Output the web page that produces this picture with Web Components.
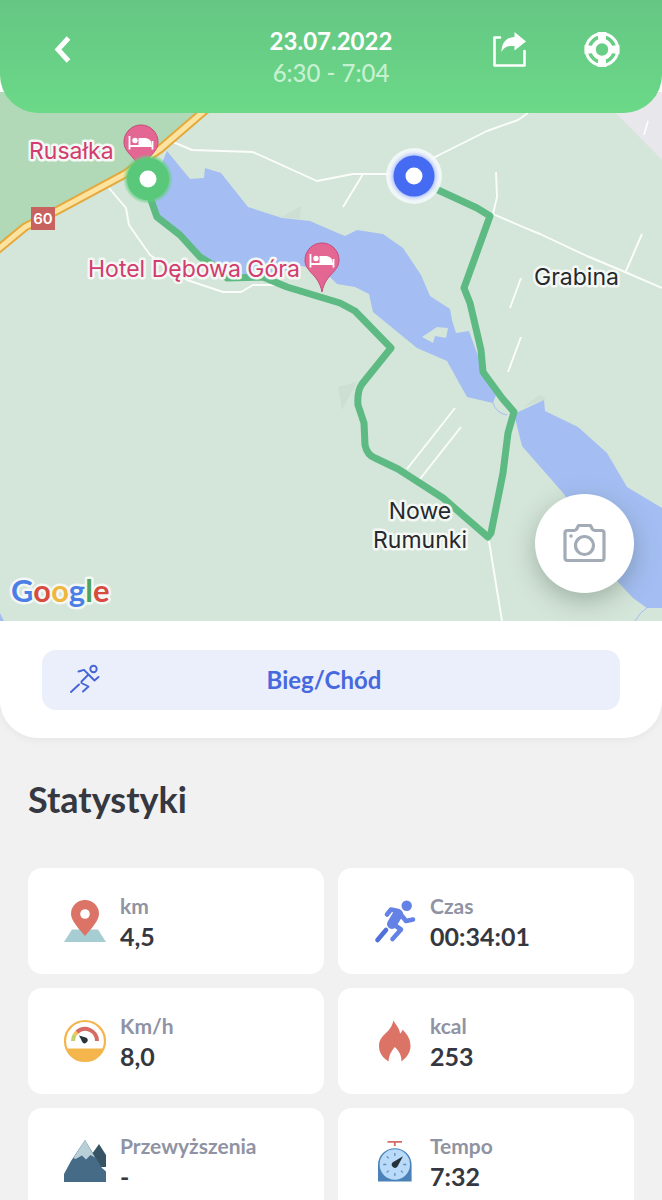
<!DOCTYPE html>
<html lang="pl">
<head>
  <meta charset="utf-8">
  <meta name="viewport" content="width=device-width, initial-scale=1">
  <title>Trening 23.07.2022</title>
  <style>
    body {
      margin: 0;
      background-color: #f1f1f1;
      color: #353840;
      font-family: Lato, "Liberation Sans", sans-serif;
    }
  </style>
</head>
<body>
  <workout-page></workout-page>

  <script>
    const icons = {
      back: `<path d="M28.500 9 18 20.500 28.500 32" fill="none" stroke="#fff" stroke-width="5"/>`,
      share: `
        <path d="M10 8.500H4.500V36.500H34.500V22" fill="none" stroke="#fff" stroke-width="2.600" stroke-linejoin="round" stroke-linecap="round"/>
        <path d="M24.500 3 36 12.500 24.500 21.500V17C18 16.500 14 18 11.500 23C11.500 14 16 8.500 24.500 8Z" fill="#fff"/>`,
      help: `
        <circle cx="20" cy="20.500" r="15.800" fill="none" stroke="#fff" stroke-width="3"/>
        <circle cx="20" cy="20.500" r="8.500" fill="none" stroke="#fff" stroke-width="4.500"/>
        <path d="M15.500 3h9l-1 10h-7zM15.500 38h9l-1-10h-7zM2.500 16v9l10-1v-7zM37.500 16v9l-10-1v-7z" fill="#fff"/>`,
      camera: `
        <g fill="none" stroke="#a3abb7" stroke-width="3.200" stroke-linejoin="round">
          <path d="M3.500 7.500H10.500Q12 7.500 13 5.500L14.500 2.500H26.500L28 5.500Q29 7.500 30.500 7.500H37.500Q40 7.500 40 10V35Q40 37.500 37.500 37.500H3.500Q1 37.500 1 35V10Q1 7.500 3.500 7.500Z"/>
          <circle cx="20.500" cy="22.500" r="9"/>
        </g>
        <circle cx="7" cy="13" r="1.800" fill="#a3abb7"/>`,
      run: `
        <g fill="none" stroke="#4465d6" stroke-width="1.900" stroke-linecap="round" stroke-linejoin="round">
          <circle cx="23.500" cy="4" r="3.200"/>
          <path d="M8.500 6.500 14 4.800 18.500 9.500 24.500 15.500 28.500 12M18.500 9.500 11.500 16.500V18L18.500 21.500 13 26.500M9 19.500 1 27"/>
        </g>`,
      distance: `
        <path d="M8 29.500H34L42 42H0Z" fill="#a5cdd2"/>
        <path d="M21 36C15 29 7 20.500 7 14A14 14 0 0 1 35 14C35 20.500 27 29 21 36Z" fill="#db7367"/>
        <circle cx="21" cy="14" r="4.800" fill="#fff"/>`,
      time: `
        <g fill="none" stroke="#6481e5" stroke-width="4.600" stroke-linecap="round" stroke-linejoin="round">
          <circle cx="32.700" cy="5.800" r="5.200" fill="#6481e5" stroke="none"/>
          <path d="M13 14.500 17 9.500 24 11 32 21 39 19.500M19 24 27 29.500 18.500 39"/>
          <path d="M24 14 18 24" stroke-width="10"/>
          <path d="M12 30 3.500 40" stroke="#5270d9"/>
        </g>`,
      speed: `
        <path d="M2.500 28.500H39.500A20 20 0 0 1 2.500 28.500Z" fill="#f4b54c"/>
        <circle cx="21" cy="21" r="20" fill="none" stroke="#f4b54c" stroke-width="2.200"/>
        <g fill="none" stroke-width="4">
          <path d="M9 21A12 12 0 0 1 10.600 15" stroke="#c2d16a"/>
          <path d="M10.600 15A12 12 0 0 1 14 11.300" stroke="#f1c25a"/>
          <path d="M13 12A12 12 0 0 1 33 21" stroke="#d56c63"/>
        </g>
        <path d="M15 15.500 22.500 17.800A3 3 0 1 1 18.600 22.500Z" fill="#29343b"/>`,
      energy: `<path d="M19.500 .5C22 5 25.500 8 26 13.500C27 13 28 11.500 28.500 9.500C32 13 36.500 18 36.500 26C36.500 33 32 38 27.500 41.500C27.500 35 25 31 20.800 27C17.500 31 15 35 14.500 41.500C9 38 5 33 5 26C5 18 10 15.500 14 11C17 7.500 18.500 4.500 19.500 .5Z" fill="#db7367"/>`,
      climb: `
        <path d="M35 4 42 15V27H28V14Z" fill="#365463"/>
        <path d="M21 0 38 28 42 31.500V42H0V34L7 21Z" fill="#466b87"/>
        <path d="M21 0 31 17.500 26.500 15 22 19.500 18 15.500 11.500 19 9.500 18Z" fill="#b8cfd8"/>`,
      pace: `
        <path d="M13.500 1.800H28M20.800 1.800V6" stroke="#d56c63" stroke-width="1.800" fill="none"/>
        <path d="M4 41.500V25A16.800 16.800 0 0 1 37.600 25V41.500Z" fill="#4a82b8"/>
        <circle cx="20.800" cy="24.500" r="15.200" fill="#b9daf8"/>
        <path d="M20.800 13v3M20.800 33v3M9.300 24.500h3M29.300 24.500h3M12.700 16.400l2 2M12.700 32.600l2-2M28.900 32.600l-2-2" stroke="#5f90bb" stroke-width="1.300"/>
        <path d="M29 16.200 23.500 26.500A3.200 3.200 0 1 1 18.500 22.500Z" fill="#26323a"/>`
    };

    class TrackIcon extends HTMLElement {
      connectedCallback() {
        const size = this.getAttribute("size") || 42;
        this.attachShadow({ mode: "open" }).innerHTML = `
          <style>
            :host {
              display: block;
              flex: none;
            }

            svg {
              display: block;
              overflow: visible;
            }
          </style>
          <svg width="${size}" height="${size}" viewBox="0 0 ${size} ${size}" aria-hidden="true">
            ${icons[this.getAttribute("name")]}
          </svg>
        `;
      }
    }

    class WorkoutHeader extends HTMLElement {
      constructor() {
        super();
        this.attachShadow({ mode: "open" }).innerHTML = `
          <style>
            :host {
              display: block;
              position: relative;
              z-index: 1;
            }

            header {
              display: grid;
              grid-template-columns: 1fr auto 1fr;
              align-items: start;
              padding: 25px 40px 24px;
              border-radius: 0 0 38px 38px;
              background: linear-gradient(#65c683, #6bd988);
              color: #fff;
            }

            button {
              margin: 4px 0 0;
              padding: 0;
              border: 0;
              background: none;
              cursor: pointer;
            }

            .actions {
              display: flex;
              justify-content: flex-end;
              gap: 52px;
            }

            .title {
              text-align: center;
            }

            h1, p {
              margin: 0;
              font-size: 24px;
              line-height: 32px;
            }

            h1 {
              font-weight: 700;
            }

            p {
              color: #c6f1d1;
              font-weight: 500;
            }
          </style>

          <header>
            <div><button aria-label="Wstecz"><track-icon name="back" size="40"></track-icon></button></div>
            <div class="title">
              <h1><slot name="date"></slot></h1>
              <p><slot name="hours"></slot></p>
            </div>
            <div class="actions">
              <button aria-label="Udostępnij"><track-icon name="share" size="40"></track-icon></button>
              <button aria-label="Pomoc"><track-icon name="help" size="40"></track-icon></button>
            </div>
          </header>
        `;
      }
    }

    class RouteMap extends HTMLElement {
      constructor() {
        super();
        this.attachShadow({ mode: "open" }).innerHTML = `
          <style>
            :host {
              display: block;
              position: relative;
              margin-top: -21px;
            }

            svg {
              display: block;
              width: 100%;
            }

            text {
              font-family: Inter, Roboto, sans-serif;
              font-size: 23px;
              fill: #26292c;
              stroke: #f4f8f5;
              stroke-width: 5px;
              stroke-linejoin: round;
              paint-order: stroke;
            }

            .hotel {
              fill: #d23c6e;
            }

            .road-number {
              font-size: 15px;
              font-weight: 600;
              fill: #fff;
              stroke: none;
            }

            .logo {
              font-family: Lato, sans-serif;
              font-size: 31px;
              font-weight: 700;
            }

            .camera {
              position: absolute;
              right: 28px;
              bottom: 28px;
              display: grid;
              place-items: center;
              width: 99px;
              height: 99px;
              padding: 0;
              border: 0;
              border-radius: 50%;
              background-color: #fff;
              box-shadow: 0 8px 24px rgba(60, 80, 70, 0.35);
              cursor: pointer;
            }
          </style>

          <svg viewBox="0 92 662 529" role="group" aria-label="Mapa trasy">
            <defs>
              <radialGradient id="start-glow">
                <stop offset=".8" stop-color="#5fd07f"/>
                <stop offset="1" stop-color="#5fd07f" stop-opacity="0"/>
              </radialGradient>
              <radialGradient id="end-glow">
                <stop offset=".75" stop-color="#8ea6fb"/>
                <stop offset="1" stop-color="#e6ecfd" stop-opacity=".3"/>
              </radialGradient>
              <g id="hotel-pin">
                <path d="M0 32C-2 22-6 18-11 12.500C-15 8-17 5-17 0A17 17 0 0 1 17 0C17 5 15 8 11 12.500C6 18 2 22 0 32Z" fill="#e36792" stroke="#c64a78"/>
                <path d="M-11.500-6V7.500M-11.500 4H11.500M11.500-1V7.500" fill="none" stroke="#fff" stroke-width="1.800"/>
                <path d="M-2.500 3V-4H3C8-4 10.500-2 10.500 3Z" fill="#fff"/>
                <circle cx="-6" cy="-1.500" r="2.700" fill="#fff"/>
              </g>
            </defs>

            <!-- land -->
            <path d="M0 92H662V621H0Z" fill="#d4e5d9"/>
            <path d="M0 92H228L160 148 125 172 60 208 25 227 0 248Z" fill="#b1d8b7"/>
            <path d="M595 92H662V160Z" fill="#e7e7ec"/>
            <path d="M301 206 282 217 300 219ZM338 387 357 382 342 410ZM523 407 540 395 546 399Z" fill="#cdded2"/>

            <!-- water -->
            <g fill="#a4bef3">
              <path d="M167 151 190 179 204 178 205 168 221 173 248 207 282 218 310 221 340 234 345 236 357 230 383 234 403 248 421 275 430 296 450 309 452 320 456 333 469 331 482 367 497 392 493 403 467 397 447 361 417 348 373 312 369 294 355 287 337 284 325 272 302 266 270 275 240 275 208 262 160 217 150 190 162 163Z"/>
              <path d="M514 414 544 400 545 411 578 427 607 453 627 487 662 508V608H647L633 598 618 582 564 494 522 446Z"/>
              <path d="M0 613 4 621H0Z"/>
            </g>
            <path d="M493 403Q496 413 507 415M648 607Q640 612 635 621" fill="none" stroke="#a4bef3"/>
            <path d="M422 337 437 327 448 328 446 338 435 336 433 343Z" fill="#d4e5d9"/>

            <!-- local roads -->
            <path d="M173 142 192 150 253 152 317 181 353 174H414L435 157 487 131 518 120 528 113M363 174 343 207M496 172 497 197 493 214 523 227 540 234 587 256 625 272 662 288M642 234 626 271M521 278 510 308M521 337 508 372M455 408 407 469M461 427 420 479M489 541 502 621M648 121 644 135M109 188 126 208 129 225 150 255 187 280 223 292H241L253 285H277" fill="none" stroke="#fbfdfb" stroke-width="1.900" stroke-linejoin="round"/>

            <!-- road 60 -->
            <g fill="none" stroke-linejoin="round">
              <path d="M-4 251 25 227 60 209 125 174 160 149 225 93" stroke="#e4a93c" stroke-width="9"/>
              <path d="M-4 251 25 227 60 209 125 174 160 149 225 93" stroke="#fce3a0" stroke-width="5"/>
            </g>
            <path d="M31 207H55V230H31Z" fill="#c8625f"/>
            <text class="road-number" x="43" y="224" text-anchor="middle">60</text>

            <!-- track -->
            <path d="M148 180 151 200 157 217 180 235 200 257 213 265 227 278 263 277 287 287 340 303 355 311 391 348 362 384Q357 391 358 405L364 423 365 445Q367 455 375 458L398 469 443 498 488 537 491 533 497 503 503 473 508 433 514 412 502 398 483 372 481 350 474 320 470 303 464 288 490 216 477 208 438 190 414 177" fill="none" stroke="#5dba82" stroke-width="7" stroke-linejoin="round"/>

            <use href="#hotel-pin" x="141" y="142"/>
            <use href="#hotel-pin" x="322" y="260"/>

            <circle cx="148" cy="179" r="25" fill="url(#start-glow)"/>
            <circle cx="148" cy="179" r="21" fill="#5ac87a"/>
            <circle cx="148" cy="179" r="8.500" fill="#fff"/>

            <circle cx="414" cy="176" r="28" fill="#f3f8fa" fill-opacity=".9"/>
            <circle cx="414" cy="176" r="25" fill="url(#end-glow)"/>
            <circle cx="414" cy="176" r="20.500" fill="#456bf2"/>
            <circle cx="414" cy="176" r="8.500" fill="#fff"/>

            <text class="hotel" x="29" y="159">Rusałka</text>
            <text class="hotel" x="88" y="277">Hotel Dębowa Góra</text>
            <text x="534" y="285">Grabina</text>
            <text x="420" y="519" text-anchor="middle">Nowe</text>
            <text x="420" y="548" text-anchor="middle">Rumunki</text>
            <text class="logo" x="11" y="602"><tspan fill="#4c7fe6">G</tspan><tspan fill="#d84b3f">o</tspan><tspan fill="#efb63e">o</tspan><tspan fill="#4c7fe6">g</tspan><tspan fill="#4da35c">l</tspan><tspan fill="#d84b3f">e</tspan></text>
          </svg>
          <button class="camera" aria-label="Zdjęcia"><track-icon name="camera"></track-icon></button>
        `;
      }
    }

    class ActivityType extends HTMLElement {
      constructor() {
        super();
        this.attachShadow({ mode: "open" }).innerHTML = `
          <style>
            :host {
              display: block;
              padding: 29px 42px 28px;
              border-radius: 0 0 38px 38px;
              background-color: #fff;
              box-shadow: 0 2px 8px rgba(0, 0, 0, 0.05);
            }

            button {
              display: flex;
              align-items: center;
              width: 100%;
              height: 60px;
              padding: 0 72px 0 28px;
              border: 0;
              border-radius: 14px;
              background-color: #ebeffc;
              color: #4769de;
              font: 700 24px/32px Lato, sans-serif;
              cursor: pointer;
            }

            span {
              flex: 1;
              text-align: center;
            }
          </style>

          <button>
            <track-icon name="run" size="30"></track-icon>
            <span><slot></slot></span>
          </button>
        `;
      }
    }

    class StatCard extends HTMLElement {
      constructor() {
        super();
        this.attachShadow({ mode: "open" });
      }

      connectedCallback() {
        this.shadowRoot.innerHTML = `
          <style>
            :host {
              display: flex;
              align-items: center;
              gap: 14px;
              padding: 23px 36px;
              border-radius: 14px;
              background-color: #fff;
            }

            p {
              margin: 0;
              font-weight: 700;
              line-height: 30px;
            }

            .label {
              color: #8f93a3;
              font-size: 21px;
            }

            .value {
              font-size: 25px;
            }
          </style>

          <track-icon name="${this.getAttribute("icon")}"></track-icon>
          <div>
            <p class="label">${this.getAttribute("label")}</p>
            <p class="value"><slot></slot></p>
          </div>
        `;
      }
    }

    class WorkoutPage extends HTMLElement {
      constructor() {
        super();
        this.attachShadow({ mode: "open" }).innerHTML = `
          <style>
            :host {
              display: block;
            }

            .top {
              background-color: #fff;
              border-radius: 0 0 38px 38px;
            }

            section {
              padding: 37px 28px 28px;
            }

            h2 {
              margin: 0 0 45px;
              font-size: 36px;
              font-weight: 700;
              line-height: 48px;
            }

            .stats {
              display: grid;
              grid-template-columns: 1fr 1fr;
              gap: 14px;
            }
          </style>

          <div class="top">
            <workout-header>
              <span slot="date">23.07.2022</span>
              <span slot="hours">6:30 - 7:04</span>
            </workout-header>
            <route-map></route-map>
            <activity-type>Bieg/Chód</activity-type>
          </div>
          <section>
            <h2>Statystyki</h2>
            <div class="stats">
              <stat-card icon="distance" label="km">4,5</stat-card>
              <stat-card icon="time" label="Czas">00:34:01</stat-card>
              <stat-card icon="speed" label="Km/h">8,0</stat-card>
              <stat-card icon="energy" label="kcal">253</stat-card>
              <stat-card icon="climb" label="Przewyższenia">-</stat-card>
              <stat-card icon="pace" label="Tempo">7:32</stat-card>
            </div>
          </section>
        `;
      }
    }

    customElements.define("track-icon", TrackIcon);
    customElements.define("workout-header", WorkoutHeader);
    customElements.define("route-map", RouteMap);
    customElements.define("activity-type", ActivityType);
    customElements.define("stat-card", StatCard);
    customElements.define("workout-page", WorkoutPage);
  </script>
</body>
</html>
